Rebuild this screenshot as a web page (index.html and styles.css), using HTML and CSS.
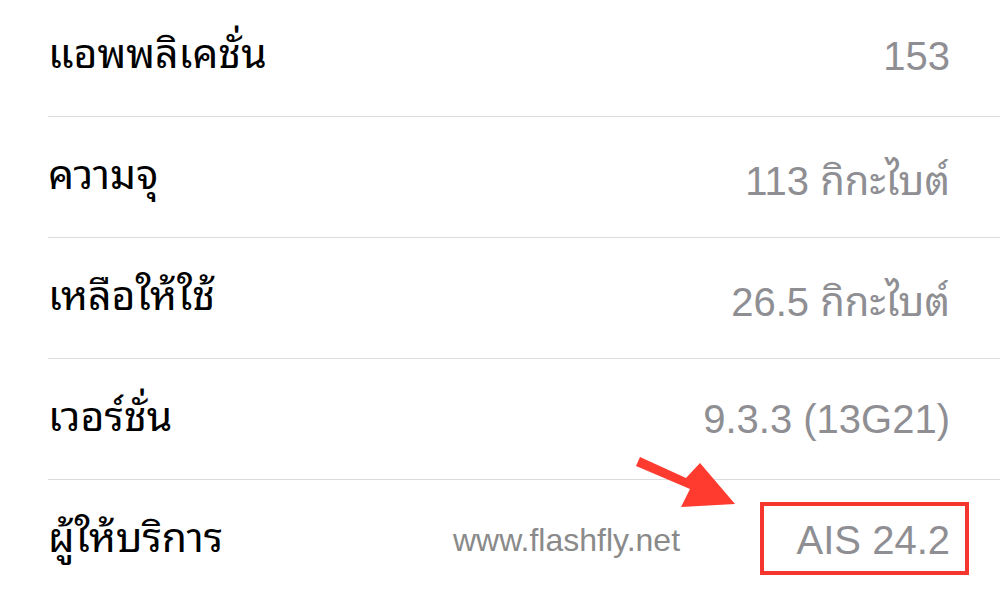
FILE: index.html
```html
<!DOCTYPE html>
<html lang="th">
<head>
    <meta charset="UTF-8">
    <title>เกี่ยวกับ</title>
    <link rel="stylesheet" href="styles.css">
</head>
<body>
<div class="list">
    <div class="row">
        <span class="label">แอพพลิเคชั่น</span>
        <span class="value">153</span>
    </div>
    <div class="row">
        <span class="label">ความจุ</span>
        <span class="value">113 กิกะไบต์</span>
    </div>
    <div class="row">
        <span class="label">เหลือให้ใช้</span>
        <span class="value">26.5 กิกะไบต์</span>
    </div>
    <div class="row">
        <span class="label">เวอร์ชั่น</span>
        <span class="value">9.3.3 (13G21)</span>
    </div>
    <div class="row">
        <span class="label">ผู้ให้บริการ</span>
        <span class="value marked">AIS 24.2</span>
    </div>
</div>

<div class="watermark">www.flashfly.net</div>

<svg class="arrow" width="120" height="70" viewBox="0 0 120 70">
    <polygon points="20,3 66,24 80,9 115,50 61,53 70,35 16,12" fill="#ff3b30"/>
</svg>
</body>
</html>
```

FILE: styles.css
```css
body {
    margin: 0;
    background-color: #fff;
    font-family: "Liberation Sans", "Noto Sans Thai Looped", "Noto Serif Thai", "Loma", "Garuda", "Noto Sans Thai", "Noto Sans", "DejaVu Sans", sans-serif;
    overflow: hidden;
}
.list {
    margin-top: -4px;
    padding-left: 48px;
}
.row {
    height: 120px;
    display: flex;
    align-items: center;
    justify-content: space-between;
    padding-right: 50px;
    border-bottom: 1px solid #dcdcdf;
    font-size: 40px;
}
.label {
    color: #000;
    font-size: 41px;
    padding-bottom: 14px;
}
.value {
    color: #8e8e93;
}
.marked {
    position: relative;
}
.marked::after {
    content: "";
    position: absolute;
    left: -37px;
    right: -19px;
    top: -16px;
    bottom: -12px;
    border: 4px solid #f4362e;
}
.watermark {
    position: absolute;
    left: 453px;
    top: 522px;
    font-size: 32px;
    color: #8a8a8a;
}
.arrow {
    position: absolute;
    left: 620px;
    top: 454px;
}
```
